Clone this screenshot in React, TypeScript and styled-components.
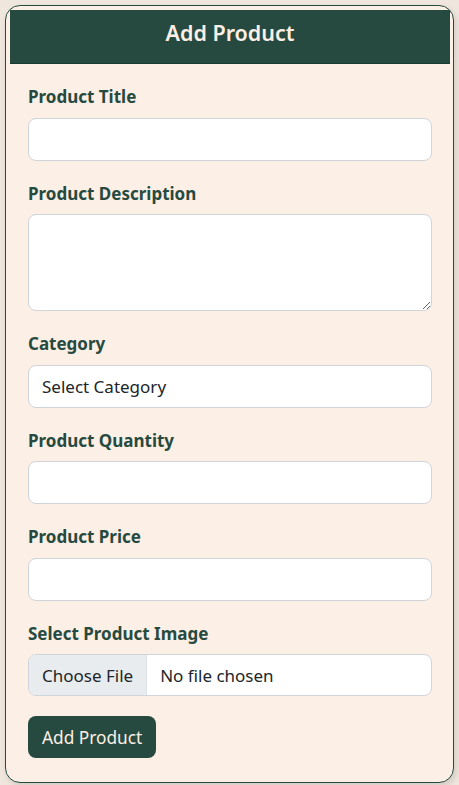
import React from 'react';
import { styled, createGlobalStyle } from 'styled-components';

const GlobalStyle = createGlobalStyle`
  * {
    box-sizing: border-box;
  }

  body {
    margin: 0;
    background: #efe6dd;
    font-family: 'Noto Sans', 'Open Sans', sans-serif;
  }
`;

const fields = [
  { id: 'title', label: 'Product Title', kind: 'input' },
  { id: 'description', label: 'Product Description', kind: 'textarea' },
  { id: 'category', label: 'Category', kind: 'select' },
  { id: 'quantity', label: 'Product Quantity', kind: 'input' },
  { id: 'price', label: 'Product Price', kind: 'input' },
  { id: 'image', label: 'Select Product Image', kind: 'file' },
];

const App: React.FC = () => {
  return (
    <PageStyle>
      <GlobalStyle />
      <CardStyle>
        <HeaderStyle>Add Product</HeaderStyle>
        <FormStyle onSubmit={(e) => e.preventDefault()}>
          {fields.map((field) => (
            <GroupStyle key={field.id}>
              <LabelStyle htmlFor={field.id}>{field.label}</LabelStyle>
              {field.kind === 'input' && <InputStyle id={field.id} type="text" />}
              {field.kind === 'textarea' && <TextAreaStyle id={field.id} rows={3} />}
              {field.kind === 'select' && (
                <SelectStyle id={field.id} defaultValue="">
                  <option value="">Select Category</option>
                </SelectStyle>
              )}
              {field.kind === 'file' && <FileInputStyle id={field.id} type="file" />}
            </GroupStyle>
          ))}
          <ButtonStyle type="submit">Add Product</ButtonStyle>
        </FormStyle>
      </CardStyle>
    </PageStyle>
  );
};

const PageStyle = styled.div`
  padding: 5px;
`;

const CardStyle = styled.div`
  background: #fcefe6;
  border: 1px solid #264a3f;
  border-radius: 15px;
  padding: 4px 3px 0 4px;
  box-shadow: 2px 3px 6px rgba(0, 0, 0, 0.12);
`;

const HeaderStyle = styled.h2`
  margin: 0;
  height: 54px;
  padding-bottom: 8px;
  display: flex;
  align-items: center;
  justify-content: center;
  background: #264a3f;
  color: #fcefe6;
  font-size: 21.5px;
  font-weight: 600;
  border-bottom: 1px solid #1d3a31;
`;

const FormStyle = styled.form`
  padding: 20px 18px 24px;
`;

const GroupStyle = styled.div`
  display: flex;
  flex-direction: column;
  margin-bottom: 20px;
`;

const LabelStyle = styled.label`
  color: #264a3f;
  font-size: 17px;
  font-weight: 700;
  line-height: 25.5px;
  margin-bottom: 8px;
`;

const fieldBase = `
  width: 100%;
  font-family: inherit;
  font-size: 17px;
  line-height: 27px;
  color: #212529;
  background: #fff;
  border: 1px solid #ced4da;
  border-radius: 8px;
  outline: none;
`;

const InputStyle = styled.input`
  ${fieldBase}
  height: 43px;
  padding: 6px 13px;
`;

const TextAreaStyle = styled.textarea`
  ${fieldBase}
  height: 97px;
  padding: 6px 13px;
  resize: vertical;
`;

const SelectStyle = styled.select`
  ${fieldBase}
  height: 43px;
  padding: 6px 13px;
  appearance: none;
`;

const FileInputStyle = styled.input`
  ${fieldBase}
  height: 42px;
  padding: 0;
  overflow: hidden;

  &::file-selector-button {
    font-family: inherit;
    font-size: 17px;
    color: #212529;
    background: #e9ecef;
    border: none;
    border-right: 1px solid #dee2e6;
    height: 40px;
    padding: 0 13px;
    margin-right: 13px;
  }
`;

const ButtonStyle = styled.button`
  font-family: inherit;
  font-size: 17.3px;
  height: 42px;
  padding: 0 14px;
  color: #fcefe6;
  background: #264a3f;
  border: none;
  border-radius: 8px;
`;

export default App;
